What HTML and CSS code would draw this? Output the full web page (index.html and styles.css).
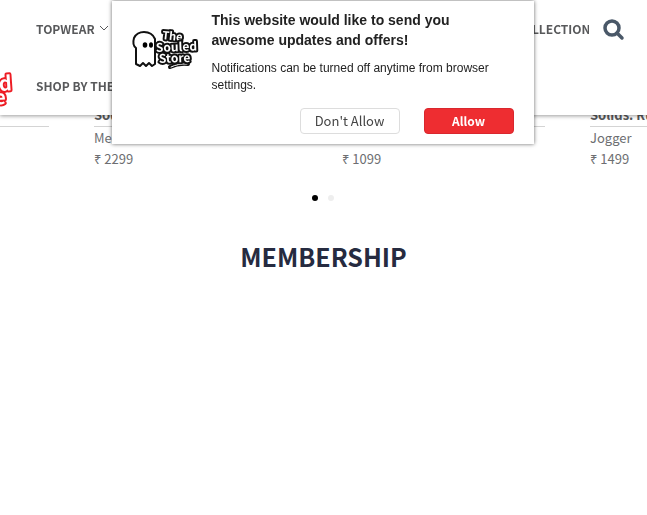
FILE: index.html
```html
<!DOCTYPE html>
<html lang="en">
<head>
<meta charset="utf-8">
<meta name="viewport" content="width=device-width, initial-scale=1">
<title>The Souled Store</title>
<link rel="stylesheet" href="styles.css">
</head>
<body>
<header class="header">
  <a class="brand" href="#" aria-label="Home">
    <svg class="brand-mark" viewBox="0 0 64 42" aria-hidden="true">
      <g class="wordmark wordmark-red" text-anchor="end">
        <text x="62" y="23" font-size="20" transform="rotate(-4 62 23)">Souled</text>
        <text x="56" y="37" font-size="19" transform="rotate(-3 56 37)">Store</text>
      </g>
    </svg>
  </a>
  <nav class="nav">
    <div class="nav-row">
      <a class="nav-link" href="#">TOPWEAR
        <svg class="chevron" viewBox="0 0 10 10" aria-hidden="true"><path d="M1 3l4 4 4-4"/></svg>
      </a>
      <a class="nav-last" href="#">COLLECTIONS</a>
    </div>
    <div class="nav-row"><a class="nav-link" href="#">SHOP BY THEMES</a></div>
  </nav>
  <button class="search" aria-label="Search">
    <svg viewBox="0 0 22 22" aria-hidden="true"><circle cx="9" cy="9" r="7"/><path d="M14 14l5 5"/></svg>
  </button>
</header>

<main>
  <section class="products">
    <article class="product"><h3>Solids</h3><p>Joggers</p><p>₹ 1299</p></article>
    <article class="product"><h3>Souled</h3><p>Men</p><p>₹ 2299</p></article>
    <article class="product"><h3>Solids</h3><p>Men</p><p>₹ 1099</p></article>
    <article class="product"><h3>Solids: Rust</h3><p>Jogger</p><p>₹ 1499</p></article>
  </section>
  <div class="dots"><span class="dot dot-on"></span><span class="dot"></span></div>
  <h2 class="heading">MEMBERSHIP</h2>
</main>

<div class="prompt" role="dialog" aria-labelledby="prompt-title">
  <svg class="prompt-logo" viewBox="0 0 64 42" aria-hidden="true">
    <path class="ghost" d="M4 37V21Q0 18 2 11Q5 5 12 5Q20 5 23 12V37L20 39L17 36L14 39L11 36L8 39Z"/>
    <ellipse cx="13" cy="18" rx="2.3" ry="2.8"/>
    <ellipse cx="19" cy="18" rx="2" ry="2.8"/>
    <path class="swash" d="M38 40Q46 36 56 37"/>
    <path class="swash-fill" d="M39 40Q46 36.500 55 37"/>
    <g class="wordmark">
      <text x="30" y="12" font-size="11" transform="rotate(6 30 12)">The</text>
      <text x="24" y="25" font-size="12" transform="rotate(-2 24 25)">Souled</text>
      <text x="27" y="36" font-size="12" transform="rotate(-2 27 36)">Store</text>
    </g>
  </svg>
  <div class="prompt-body">
    <h1 id="prompt-title">This website would like to send you awesome updates and offers!</h1>
    <p>Notifications can be turned off anytime from browser settings.</p>
    <div class="actions">
      <button class="btn">Don't Allow</button>
      <button class="btn btn-allow">Allow</button>
    </div>
  </div>
</div>
</body>
</html>
```
FILE: styles.css
```css
* { box-sizing: border-box; }

body {
  margin: 0;
  overflow: hidden;
  background: #fff;
  color: #58595b;
  font-family: "Noto Sans CJK SC", "Noto Sans", sans-serif;
  font-size: 13px;
}

h1, h2, h3, p { margin: 0; }
a { color: inherit; text-decoration: none; }
button { font: inherit; cursor: pointer; }

.header {
  position: fixed;
  top: 0;
  left: 0;
  right: 0;
  z-index: 1;
  display: flex;
  background: #fff;
  box-shadow: 0 1px 4px rgba(0, 0, 0, 0.4);
}

.brand {
  display: flex;
  justify-content: flex-end;
  align-items: flex-end;
  width: 36px;
  padding: 0 22px 6px 0;
  overflow: hidden;
}
.brand-mark { flex: none; width: 64px; height: 42px; overflow: visible; }

.nav { flex: 1; min-width: 0; overflow: hidden; }
.nav-row {
  display: flex;
  justify-content: space-between;
  align-items: center;
  height: 56px;
  font-size: 12px;
  font-weight: 700;
  white-space: nowrap;
}
.nav-row + .nav-row { height: 59px; }
.nav-link { display: flex; align-items: center; gap: 4px; }
.nav-last { margin-right: -9px; }
.chevron { width: 10px; height: 10px; fill: none; stroke: #58595b; stroke-width: 1; }

.search {
  align-self: flex-start;
  width: 58px;
  height: 60px;
  padding: 3px 0 0 14px;
  border: 0;
  background: none;
  text-align: left;
}
.search svg { width: 22px; height: 22px; fill: none; stroke: #4a5868; stroke-width: 3.5; stroke-linecap: round; }

.products {
  display: flex;
  gap: 45px;
  margin-left: -154px;
  padding-top: 104px;
}
.product { flex: 0 0 203px; line-height: 21px; color: #6d6e71; }
.product h3 {
  border-bottom: 1px solid #d4d4d4;
  color: #58595b;
  font-size: 13px;
  line-height: 22px;
}

.dots { display: flex; justify-content: center; gap: 10px; padding: 26px 2px 0 0; }
.dot { width: 6px; height: 6px; border-radius: 50%; background: #eee; }
.dot-on { background: #000; }

.heading {
  margin-top: 35px;
  color: #262b40;
  font-size: 25px;
  line-height: 40px;
  text-align: center;
}

.prompt {
  position: fixed;
  top: 1px;
  left: 50%;
  z-index: 2;
  display: flex;
  gap: 16px;
  width: 422px;
  margin-left: -212px;
  padding: 9px 20px 10px;
  background: #fff;
  box-shadow: 0 0 4px rgba(0, 0, 0, 0.6);
  color: #222;
  font-family: "Liberation Sans", Arial, sans-serif;
}
.prompt-logo { flex: none; width: 64px; height: 42px; margin-top: 17px; overflow: visible; }
.prompt-body { flex: 1; }
.prompt h1 { font-size: 14px; line-height: 20px; }
.prompt p { margin-top: 10px; font-size: 12px; line-height: 17px; }

.ghost { fill: #fff; stroke: #111; stroke-width: 2; stroke-linejoin: round; }
.swash { fill: none; stroke: #111; stroke-width: 4; stroke-linecap: round; }
.swash-fill { fill: none; stroke: #fff; stroke-width: 1; stroke-linecap: round; }
.wordmark {
  fill: #fff;
  stroke: #111;
  stroke-width: 4;
  stroke-linejoin: round;
  paint-order: stroke;
  font-family: "Noto Sans CJK SC", sans-serif;
  font-weight: 700;
}
.wordmark-red { stroke: #ed1c24; }

.actions { display: flex; justify-content: flex-end; gap: 24px; margin-top: 14px; }
.btn {
  width: 100px;
  height: 26px;
  padding: 0;
  border: 1px solid #ddd;
  border-radius: 4px;
  background: #fff;
  color: #444;
  font-family: "Noto Sans CJK SC", sans-serif;
  font-size: 13px;
  line-height: 24px;
}
.btn-allow { width: 90px; border-color: #d9272e; background: #ee2d31; color: #fff; font-size: 12px; font-weight: 700; }
```
